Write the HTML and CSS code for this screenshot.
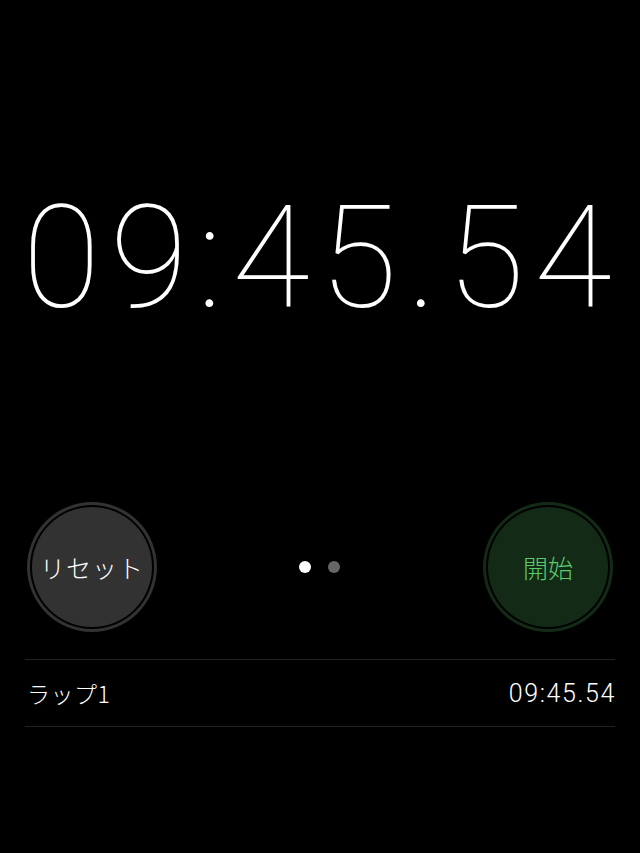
FILE: index.html
```html
<!DOCTYPE html>
<html lang="ja">
<head>
<meta charset="utf-8">
<link rel="stylesheet" href="styles.css">
</head>
<body>
<div class="screen">
  <div class="time">09:45.54</div>
  <div class="controls">
    <div class="btn reset"><div class="inner">リセット</div></div>
    <div class="dots"><span class="dot on"></span><span class="dot"></span></div>
    <div class="btn start"><div class="inner">開始</div></div>
  </div>
  <div class="laps">
    <div class="lap"><span class="lap-name">ラップ1</span><span class="lap-time">09:45.54</span></div>
  </div>
</div>
</body>
</html>
```
FILE: styles.css
```css
html, body { margin: 0; padding: 0; background: #000; }
.screen {
  width: 640px; height: 853px; background: #000; color: #fff;
  font-family: Roboto, "Noto Sans CJK JP", sans-serif;
  display: flex; flex-direction: column;
}
.time {
  margin-top: 179px;
  height: 160px;
  font-size: 142px; font-weight: 100; line-height: 160px;
  text-align: center; letter-spacing: 9.6px; padding-left: 4px;
  font-variant-numeric: tabular-nums;
}
.controls {
  margin-top: 163px;
  display: flex; align-items: center; justify-content: space-between;
  padding: 0 27px 0 27px;
}
.btn {
  width: 130px; height: 130px; border-radius: 50%;
  box-sizing: border-box; padding: 5px;
  display: flex; align-items: center; justify-content: center;
}
.btn .inner {
  width: 100%; height: 100%; border-radius: 50%;
  display: flex; align-items: center; justify-content: center;
  font-family: "Noto Sans CJK JP", sans-serif; font-size: 25px; font-weight: 300;
  box-shadow: 0 0 0 2px #000;
}
.reset { background: #323232; }
.reset .inner { background: #323232; color: #fff; letter-spacing: 1px; }
.start { background: #132a17; }
.start .inner { background: #132a17; color: #5bcb6b; }
.dots { display: flex; gap: 17px; margin-right: 2px; }
.dot { width: 12px; height: 12px; border-radius: 50%; background: #666; }
.dot.on { background: #fff; }
.laps { margin: 27px 25px 0 25px; border-top: 1px solid #222; }
.lap {
  height: 66px; border-bottom: 1px solid #222;
  display: flex; align-items: center; justify-content: space-between;
  font-size: 25px; font-weight: 300;
}
.lap-name { font-family: "Noto Sans CJK JP", sans-serif; font-size: 23px; font-weight: 300; padding-left: 2px; letter-spacing: 0.5px; }
.lap-time { letter-spacing: 1.6px; margin-right: -1px; }
```
